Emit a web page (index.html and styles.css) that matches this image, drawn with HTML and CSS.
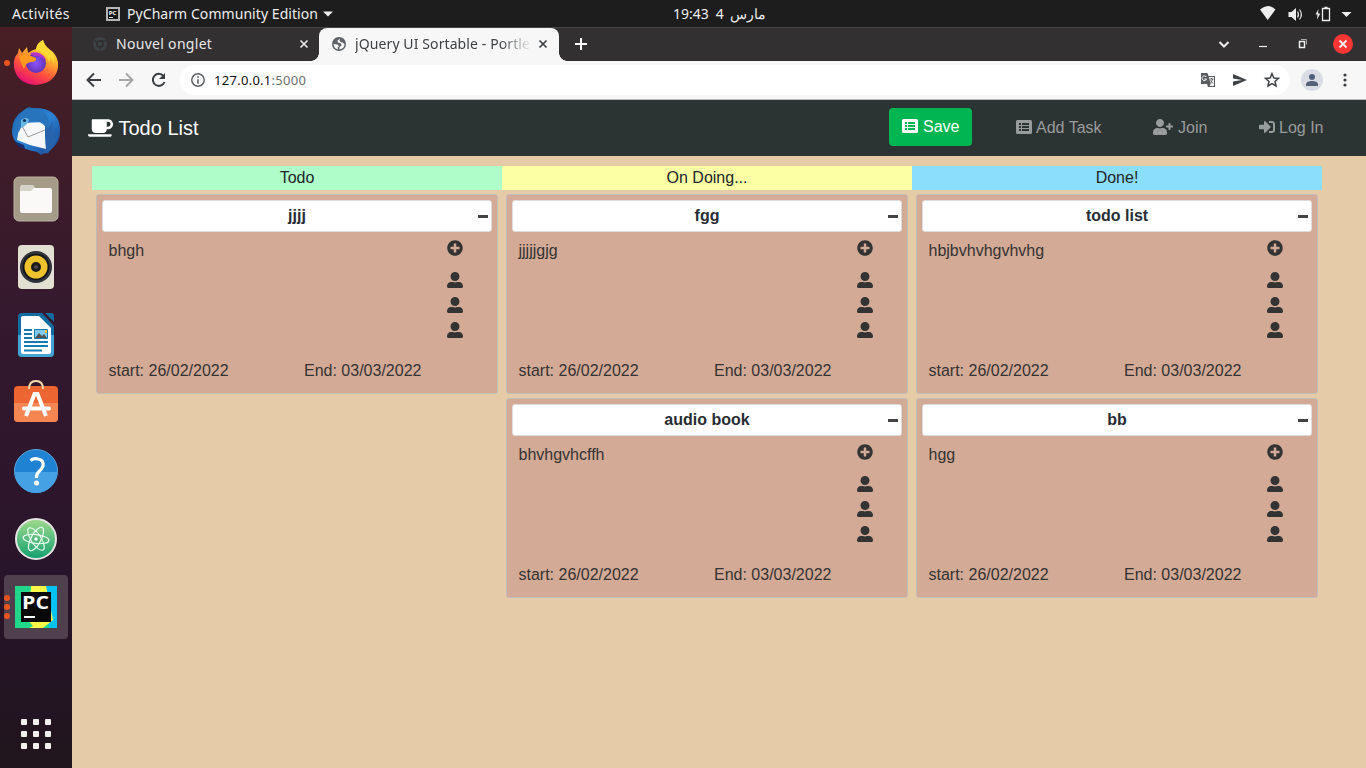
FILE: index.html
```
<!DOCTYPE html>
<html lang="fr">
<head>
<meta charset="utf-8">
<title>jQuery UI Sortable - Portlets</title>
<link rel="stylesheet" href="styles.css">
</head>
<body>
<svg class="defs" width="0" height="0">
<symbol id="coffee" viewBox="0 0 640 512"><path fill="currentColor" d="M192 384h192c53 0 96-43 96-96h32c70.6 0 128-57.4 128-128S582.6 32 512 32H120c-13.3 0-24 10.7-24 24v232c0 53 43 96 96 96zM512 96c35.3 0 64 28.7 64 64s-28.7 64-64 64h-32V96h32zm47.7 384H48.3c-47.6 0-61-64-36-64h583.3c25 0 11.8 64-35.9 64z"/></symbol>
<symbol id="user" viewBox="0 0 512 512"><path fill="currentColor" d="M256 288c79.5 0 144-64.5 144-144S335.5 0 256 0 112 64.5 112 144s64.5 144 144 144zm128 32h-55.1c-22.2 10.2-46.9 16-72.9 16s-50.6-5.8-72.9-16H128C57.3 320 0 377.3 0 448v16c0 26.5 21.5 48 48 48h416c26.5 0 48-21.5 48-48v-16c0-70.7-57.3-128-128-128z"/></symbol>
<symbol id="plus" viewBox="0 0 512 512"><path fill="currentColor" d="M256 8C119 8 8 119 8 256s111 248 248 248 248-111 248-248S393 8 256 8zm144 276c0 6.600-5.400 12-12 12h-92v92c0 6.600-5.400 12-12 12h-56c-6.600 0-12-5.400-12-12v-92h-92c-6.600 0-12-5.400-12-12v-56c0-6.600 5.400-12 12-12h92v-92c0-6.600 5.400-12 12-12h56c6.600 0 12 5.400 12 12v92h92c6.600 0 12 5.400 12 12v56z"/></symbol>
<symbol id="join" viewBox="0 0 640 512"><path fill="currentColor" d="M624 208h-64v-64c0-8.800-7.200-16-16-16h-32c-8.800 0-16 7.200-16 16v64h-64c-8.800 0-16 7.200-16 16v32c0 8.800 7.200 16 16 16h64v64c0 8.800 7.200 16 16 16h32c8.800 0 16-7.200 16-16v-64h64c8.800 0 16-7.200 16-16v-32c0-8.800-7.200-16-16-16zm-400 48c70.700 0 128-57.300 128-128S294.700 0 224 0 96 57.300 96 128s57.300 128 128 128zm89.600 32h-16.700c-22.200 10.200-46.900 16-72.900 16s-50.600-5.800-72.900-16h-16.700C60.200 288 0 348.200 0 422.400V464c0 26.500 21.500 48 48 48h352c26.500 0 48-21.500 48-48v-41.600c0-74.200-60.200-134.400-134.400-134.400z"/></symbol>
<symbol id="login" viewBox="0 0 512 512"><path fill="currentColor" d="M416 448h-84c-6.600 0-12-5.400-12-12v-40c0-6.600 5.400-12 12-12h84c17.700 0 32-14.300 32-32V160c0-17.700-14.300-32-32-32h-84c-6.600 0-12-5.400-12-12V76c0-6.600 5.400-12 12-12h84c53 0 96 43 96 96v192c0 53-43 96-96 96zm-47-209L201 71c-15-15-41-4.500-41 17v96H24c-13.300 0-24 10.700-24 24v96c0 13.300 10.700 24 24 24h136v96c0 21.500 26 32 41 17l168-168c9.300-9.400 9.300-24.600 0-34z"/></symbol>
<symbol id="list" viewBox="0 0 16 16"><path fill="currentColor" fill-rule="evenodd" d="M1.500 1h13A1.500 1.500 0 0 1 16 2.500v11a1.500 1.500 0 0 1-1.500 1.500h-13A1.500 1.500 0 0 1 0 13.500v-11A1.500 1.500 0 0 1 1.500 1zM3 4v2h2V4zM6 4v2h7V4zM3 7v2h2V7zM6 7v2h7V7zM3 10v2h2v-2zM6 10v2h7v-2z"/></symbol>
<symbol id="x" viewBox="0 0 10 10"><path d="M1.500 1.500l7 7M8.500 1.500l-7 7" fill="none" stroke="currentColor" stroke-width="1.700"/></symbol>
</svg>

<header class="topbar">
  <span class="activities">Activités</span>
  <svg class="pcmini" width="14" height="14" viewBox="0 0 14 14"><path fill="#b5b5b5" d="M0 0h14v14H0z"/><path fill="#161616" d="M2 2h10v10H2z"/><path stroke="#ddd" d="M3 10.500h4"/><text x="2.800" y="7.800" font-size="6" font-weight="700" fill="#fff" font-family="Open Sans, sans-serif">PC</text></svg>
  <span class="appname">PyCharm Community Edition</span>
  <svg class="caret" width="10" height="6"><path d="M0 .5h10L5 5.500z" fill="#eee"/></svg>
  <div class="clock"><span>19:43</span><span>4</span><span lang="ar">مارس</span></div>
  <svg class="status" width="106" height="20" viewBox="0 0 106 20" fill="#eee"><path d="M0 5.500Q8-1.500 15.500 5.500L7.700 16z"/><path d="M28.500 8h3l4.500-4v13l-4.500-4h-3z"/><path d="M37.500 7.500q2 3 0 6M39.500 5.500q3.800 5 0 10" fill="none" stroke="#ddd" stroke-width="1.200"/><path d="M58.500 5l-3 5.500h2L57 15.500l3.300-6H58z"/><path d="M62.500 4.500h7v12h-7zM64.500 3.500h3" fill="none" stroke="#eee" stroke-width="1.300"/><path d="M81.500 8h10L86.500 13z"/></svg>
</header>

<div class="desktop">
<nav class="dock">
  <div class="app"><i class="dot"></i>
   <svg width="48" height="48" viewBox="0 0 48 48"><defs><linearGradient id="ff" x1=".8" y1="0" x2=".3" y2="1"><stop stop-color="#fff44f"/><stop offset=".35" stop-color="#ffb52b"/><stop offset=".68" stop-color="#ff4f3f"/><stop offset="1" stop-color="#e50c77"/></linearGradient><radialGradient id="fp"><stop stop-color="#8a55ff"/><stop offset="1" stop-color="#6533b5"/></radialGradient></defs><path fill="url(#ff)" d="M7 9l3 5 5-6 1 6q4-3 8-4 1-6 7-9 1 5 6 9l4 3q6 7 5 15-2 16-22 18-19-1-22-18-1-9 4-14z"/><circle cx="24" cy="24" r="10" fill="url(#fp)"/><path fill="#ff9a1f" d="M7 17q7-4 12 0l5 2q1 4-5 4-6 1-7 7-4-7-5-13z"/><path fill="#ffd936" d="M24 10q1-6 7-9 1 5 6 9 6 6 5 15-1-5-4-7 0 3-1 5-3-9-13-13z"/><path fill="#b833c9" d="M18 14q11-3 16 7-8-5-12-4z"/></svg></div>
  <div class="app">
   <svg width="50" height="50" viewBox="0 0 50 50"><defs><linearGradient id="tb" x2="1" y2="1"><stop stop-color="#1c60a9"/><stop offset=".5" stop-color="#2b83d4"/><stop offset="1" stop-color="#193c88"/></linearGradient></defs><path fill="url(#tb)" d="M13 4q4-4 8-2Q48 1 49 23q1 14-10 21l-2 4-3-2-4 3-4-3Q1 42 1 25 1 11 13 4z"/><path fill="#f7f8fa" d="M9 17l25-1 1 27-16-4-13-5z"/><path d="M10 18l7 13 17-7" fill="none" stroke="#999"/><path fill="#2774bd" d="M4 24Q4 8 16 3q19-2 22 12 2 10-4 18V20Q28 14 20 15l-9 4-3 7z"/><path fill="#68b9df" d="M10 14q6-4 8 0-2 6-8 8z"/><circle cx="13.500" cy="14.500" r="1.600" fill="#153661"/><path d="M34 20q0 14 1 23l-3 5q12-3 15-20l-4 5 3-13-5 7 1-12-5 8z" fill="#2665ad"/><path d="M2 32q3 10 12 11l-1-4-8-3z" fill="#182d6b"/></svg></div>
  <div class="app">
   <svg width="46" height="46" viewBox="0 0 46 46"><rect x="1" y="1" width="44" height="44" rx="5" fill="#a49c89" stroke="#bbb3a0"/><path fill="#d7d2c7" d="M7 12V11q0-2 2-2h11l3 4v8H7z"/><path fill="#faf9f7" d="M7 15h11l3-3h16q2 0 2 2v21q0 2-2 2H9q-2 0-2-2z"/></svg></div>
  <div class="app">
   <svg width="38" height="46" viewBox="0 0 38 46"><rect x="1" y="1" width="36" height="44" rx="4" fill="#e2dfd3"/><circle cx="19" cy="23" r="16" fill="#32343c"/><circle cx="19" cy="23" r="13.500" fill="#161719"/><circle cx="19" cy="23" r="11.500" fill="#eec22c"/><circle cx="19" cy="23" r="5" fill="#1b1b1d"/><circle cx="19" cy="23" r="2" fill="#4a4a4a"/></svg></div>
  <div class="app">
   <svg width="38" height="46" viewBox="0 0 38 46"><path fill="#136ca0" d="M4 1h21l12 13v27q0 4-4 4H5q-4 0-4-4V5q0-4 3-4z"/><path fill="#42a3d4" d="M1 23h36v18q0 4-4 4H5q-4 0-4-4z"/><path fill="#fff" d="M6 4h16l12 12v24q0 2-2 2H6q-2 0-2-2V6q0-2 2-2z"/><path fill="#136ca0" d="M28 1h6q3 0 3 3v6z"/><path d="M7 18h8M7 22h8M7 26h8M7 30h24M7 34h24M7 38.500h18" stroke="#167bb5" stroke-width="2"/><path fill="#80c9ed" stroke="#167bb5" d="M17.500 17.500h13v9h-13z"/><path fill="#525252" d="M18 26l4-5 3 3 2-2 3 4z"/><path fill="#f5c331" d="M28 18h2v3h-2z"/></svg></div>
  <div class="app">
   <svg class="store" width="46" height="44" viewBox="0 0 46 44"><rect x="1" y="7" width="44" height="36" rx="4" fill="#ed6530"/><path fill="#f48653" d="M1 24h44v15q0 4-4 4H5q-4 0-4-4z"/><path d="M16 10q0-8 7-8t7 8" fill="none" stroke="#f4dfad" stroke-width="2"/><path d="M13 37l8.500-22h3L33 37" fill="none" stroke="#fff" stroke-width="4"/><path d="M11 29.500h25" stroke="#fff" stroke-width="4" stroke-linecap="round"/></svg></div>
  <div class="app">
   <svg width="46" height="46" viewBox="0 0 46 46"><circle cx="23" cy="23" r="21.500" fill="#1f82d2" stroke="#57a7e0"/><path d="M2 24h42a21 21 0 0 1-42 0z" fill="#46a0e4"/><path d="M17.500 12.500Q21 10 25 11q6 1 5 7-1 3-4 5.500-2.500 2-2.500 6.500" fill="none" stroke="#fff" stroke-width="3.200"/><circle cx="23.500" cy="35" r="2.500" fill="#fff"/></svg></div>
  <div class="app">
   <svg width="44" height="44" viewBox="0 0 44 44"><defs><linearGradient id="at" x2="0" y2="1"><stop stop-color="#a0da8c"/><stop offset="1" stop-color="#12a071"/></linearGradient></defs><circle cx="22" cy="22" r="20" fill="url(#at)" stroke="#e5e3e4" stroke-width="2"/><g fill="none" stroke="#e9fff1" stroke-width="1.200"><ellipse cx="22" cy="22" rx="5" ry="13" transform="rotate(28 22 22)"/><ellipse cx="22" cy="22" rx="5" ry="13" transform="rotate(-33 22 22)"/><ellipse cx="22" cy="22" rx="13" ry="4.500" transform="rotate(7 22 22)"/></g><circle cx="22" cy="22" r="1.700" fill="#fff"/></svg></div>
  <div class="app current"><i class="dot three"></i>
   <svg width="42" height="42" viewBox="0 0 42 42"><path fill="#21d789" d="M0 0h42v42H0z"/><path fill="#07c3f2" d="M29 0h13v42h-8z"/><path fill="#fcf84a" d="M16 0h15l7 34-10 8H13z"/><path fill="#21d789" d="M0 20l18 20-4 2H0z"/><path fill="#090909" d="M6 6h30v30H6z"/><path fill="#fff" d="M9 30h11v2H9z"/><text x="7" y="23" font-family="Open Sans, sans-serif" font-weight="700" font-size="18.500" textLength="27" lengthAdjust="spacingAndGlyphs" fill="#fff">PC</text></svg></div>
  <div class="grid"><i></i><i></i><i></i><i></i><i></i><i></i><i></i><i></i><i></i></div>
</nav>

<main class="browser">
  <div class="tabs">
    <div class="tab"><svg width="14" height="14" viewBox="0 0 14 14"><circle cx="7" cy="7" r="5.500" fill="none" stroke="#3d4245" stroke-width="3"/><circle cx="7" cy="7" r="2.300" fill="#3d4245"/><path d="M7 4h6M4.500 8L2 3M9.500 8l-3 5" stroke="#2d2b2c"/></svg><span class="t1">Nouvel onglet</span><svg class="close" width="10" height="10"><use href="#x"/></svg></div>
    <div class="tab active"><svg width="14" height="14" viewBox="0 0 14 14"><circle cx="7" cy="7" r="7" fill="#5f6368"/><path fill="#f7f7f7" d="M8 1.500L5.500 3.500 6 5.500l3 1 .500 2-2 1.500V12.500Q12.500 11.500 12.500 7L10.500 5.500 8.500 5l-1-1.500zM1.500 7l4 .500 1.500 2-1.500 1 .500 2Q2 11.500 1.500 7z"/></svg><span class="t2">jQuery UI Sortable - Portle</span><svg class="close" width="10" height="10"><use href="#x"/></svg></div>
    <svg class="newtab" width="12" height="12"><path d="M6 0v12M0 6h12" stroke="#fff" stroke-width="2"/></svg>
    <div class="winctl"><svg width="146" height="22" viewBox="0 0 146 22" fill="none" stroke="#eee"><path d="M8.500 9l4.500 4.500L17.500 9" stroke-width="2"/><path d="M48 13.500h8" stroke-width="1.200"/><path d="M88.500 8.500h5v6h-5z" stroke-width="1.500"/><path d="M90 6.500h5.500v5" stroke="#aaa"/><circle cx="132" cy="11" r="10" fill="#fc3535" stroke="none"/><path d="M128.500 7.500l7 7M135.500 7.500l-7 7" stroke-width="1.800"/></svg></div>
  </div>
  <div class="toolbar">
    <svg class="navs" width="88" height="18" viewBox="0 0 88 18" fill="none" stroke="#3c4043" stroke-width="2"><path d="M15 9H2M8 2.500L1.500 9 8 15.500"/><path stroke="#a5a5a7" d="M33 9h13M40 2.500L46.500 9 40 15.500"/><path d="M77.500 5A6 6 0 1 0 78.500 11"/><path d="M79 2v6h-6z" fill="#3c4043" stroke="none"/></svg>
    <div class="address"><svg width="14" height="14" viewBox="0 0 14 14"><circle cx="7" cy="7" r="6.200" fill="none" stroke="#5f6368" stroke-width="1.500"/><path d="M7 3.300v1.500M7 6.200v4.500" stroke="#5f6368" stroke-width="1.600"/></svg><span class="url">127.0.0.1<em>:5000</em></span>
      <svg class="actions" width="80" height="18" viewBox="0 0 80 18"><path fill="#5b5e61" d="M1 2h6.500l1 3H15v11H8l-1-3H1z"/><path fill="#f3f3f3" d="M8.800 6H14v9H9.500l1.200-2z"/><path d="M6.300 6A2.300 2.300 0 1 0 6.500 8H4.500" fill="none" stroke="#fff"/><path d="M9.800 8h3.700M11.500 7v1M12.800 8l-2.300 4M10.500 9.500l2.500 3" stroke="#666" fill="none"/><path fill="#3f4245" d="M33 3l14 6-14 6v-4.500l9-1.500-9-1.500z"/><path d="M72 2.700l1.900 4.300 4.600.4-3.500 3 1.100 4.600-4.100-2.400-4.100 2.400 1.100-4.600-3.500-3 4.600-.4z" fill="none" stroke="#3f4245" stroke-width="1.500"/></svg></div>
    <svg class="profile" width="22" height="22" viewBox="0 0 22 22"><circle cx="11" cy="11" r="11" fill="#dadde3"/><circle cx="11" cy="8" r="3" fill="#53617a"/><path d="M5 17v-1.500Q5 12 11 12t6 3.500V17z" fill="#53617a"/></svg>
    <svg class="more" width="4" height="14" fill="#3c4043"><circle cx="2" cy="2" r="1.600"/><circle cx="2" cy="7" r="1.600"/><circle cx="2" cy="12" r="1.600"/></svg>
  </div>

  <div class="navbar">
    <div class="brand"><svg width="25" height="20"><use href="#coffee"/></svg>Todo List</div>
    <a class="save"><svg width="16" height="16"><use href="#list"/></svg>Save</a>
    <a class="link add"><svg width="16" height="16"><use href="#list"/></svg>Add Task</a>
    <a class="link join"><svg width="20" height="16"><use href="#join"/></svg>Join</a>
    <a class="link"><svg width="16" height="16"><use href="#login"/></svg>Log In</a>
  </div>

  <div class="board">
    <section class="column">
      <h2 class="todo">Todo</h2>
      <article class="card"><h3>jjjj<i></i></h3><div class="body"><p>bhgh</p><div class="people"><svg><use href="#plus"/></svg><svg><use href="#user"/></svg><svg><use href="#user"/></svg><svg><use href="#user"/></svg></div></div><footer><span>start: 26/02/2022</span><span>End: 03/03/2022</span></footer></article>
    </section>
    <section class="column">
      <h2 class="doing">On Doing...</h2>
      <article class="card"><h3>fgg<i></i></h3><div class="body"><p>jjjjjgjg</p><div class="people"><svg><use href="#plus"/></svg><svg><use href="#user"/></svg><svg><use href="#user"/></svg><svg><use href="#user"/></svg></div></div><footer><span>start: 26/02/2022</span><span>End: 03/03/2022</span></footer></article>
      <article class="card"><h3>audio book<i></i></h3><div class="body"><p>bhvhgvhcffh</p><div class="people"><svg><use href="#plus"/></svg><svg><use href="#user"/></svg><svg><use href="#user"/></svg><svg><use href="#user"/></svg></div></div><footer><span>start: 26/02/2022</span><span>End: 03/03/2022</span></footer></article>
    </section>
    <section class="column">
      <h2 class="done">Done!</h2>
      <article class="card"><h3>todo list<i></i></h3><div class="body"><p>hbjbvhvhgvhvhg</p><div class="people"><svg><use href="#plus"/></svg><svg><use href="#user"/></svg><svg><use href="#user"/></svg><svg><use href="#user"/></svg></div></div><footer><span>start: 26/02/2022</span><span>End: 03/03/2022</span></footer></article>
      <article class="card"><h3>bb<i></i></h3><div class="body"><p>hgg</p><div class="people"><svg><use href="#plus"/></svg><svg><use href="#user"/></svg><svg><use href="#user"/></svg><svg><use href="#user"/></svg></div></div><footer><span>start: 26/02/2022</span><span>End: 03/03/2022</span></footer></article>
    </section>
  </div>
</main>
</div>
</body>
</html>
```
FILE: styles.css
```
* { box-sizing: border-box; margin: 0; padding: 0; }
body { width: 1366px; height: 768px; overflow: hidden; display: flex; flex-direction: column; font-family: "Noto Sans", "Open Sans", sans-serif; background: #e5cba8; }
svg { display: block; flex: none; }
.defs { position: absolute; }

.topbar { height: 27px; flex: none; background: #1d1d1d; color: #eee; display: flex; align-items: center; padding-left: 12px; font-size: 14px; white-space: nowrap; }
.activities { width: 94px; letter-spacing: .35px; }
.appname { margin-left: 7px; width: 191px; letter-spacing: .06px; }
.caret { margin-left: 5px; }
.clock { display: flex; gap: 7px; margin-left: 340px; width: 96px; }
.clock span:last-child { margin-left: -1px; }
.status { margin-left: auto; margin-right: 0; }

.desktop { display: flex; flex: 1; min-height: 0; }
.dock { width: 72px; background: linear-gradient(#471f24, #35192e 38%, #28142a 75%, #20151d); display: flex; flex-direction: column; align-items: center; padding-top: 4px; }
.app { position: relative; width: 64px; height: 64px; margin-bottom: 4px; display: flex; align-items: center; justify-content: center; border-radius: 4px; }
.store { margin-bottom: 4px; }
.current { background: #50404e; }
.dot { position: absolute; left: 0; top: 29px; width: 6px; height: 6px; border-radius: 50%; background: #e95420; }
.three { box-shadow: 0 -9px #e95420, 0 9px #e95420; }
.grid { display: grid; grid-template-columns: repeat(3, 6px); gap: 6px; margin-top: auto; margin-bottom: 19px; }
.grid i { width: 6px; height: 6px; background: #f2f0ee; border-radius: 1px; }

.browser { flex: 1; display: flex; flex-direction: column; min-width: 0; }
.tabs { height: 34px; background: #323031; border-top: 1px solid #454344; display: flex; align-items: center; padding-bottom: 1px; color: #e8e8e8; font-size: 14px; }
.tab { width: 247px; height: 33px; display: flex; align-items: center; padding: 0 0 1px 21px; white-space: nowrap; }
.tab.active { position: relative; width: 240px; padding-left: 13px; background: #f7f7f7; color: #3e4144; border-radius: 8px 8px 0 0; margin-bottom: -1px; }
.tab.active::before, .tab.active::after { content: ""; position: absolute; bottom: 0; width: 8px; height: 8px; }
.tab.active::before { left: -8px; background: radial-gradient(circle at 0 0, #323031 7.5px, #f7f7f7 8px); }
.tab.active::after { right: -8px; background: radial-gradient(circle at 100% 0, #323031 7.5px, #f7f7f7 8px); }
.t1 { margin-left: 9px; width: 183px; padding-bottom: 1px; letter-spacing: .3px; }
.t2 { margin-left: 9px; width: 175px; padding-bottom: 1px; letter-spacing: .1px; -webkit-mask-image: linear-gradient(90deg, #000 145px, transparent 177px); }
.active .close { margin-left: 8px; }
.newtab { margin-left: 16px; }
.winctl { margin-left: auto; margin-right: 9px; }

.toolbar { height: 39px; background: #f7f7f7; border-bottom: 1px solid #b9b9b9; display: flex; align-items: center; }
.navs { margin-left: 14px; }
.address { margin-left: 6px; width: 1110px; height: 30px; border-radius: 15px; background: #fff; display: flex; align-items: center; padding-left: 11px; }
.url { margin-left: 9px; color: #111; font-size: 13px; letter-spacing: .28px; }
.url em { font-style: normal; color: #6a6d71; }
.actions { margin-left: auto; margin-right: 10px; }
.profile { margin-left: 11px; }
.more { margin-left: 20px; }

.navbar { height: 56px; background: #2c3333; color: #999c9c; font: 16px/24px "Liberation Sans", Arial, sans-serif; display: flex; align-items: center; padding-left: 16px; }
.brand { display: flex; align-items: center; gap: 5.500px; width: 801px; color: #fff; font-size: 20px; }
.save { display: flex; align-items: center; width: 83px; height: 38px; padding: 0 0 1px 13px; gap: 5px; background: #00b552; color: #fff; border-radius: 4px; margin-bottom: 2px; }
.save svg { margin-bottom: 1px; }
.link { display: flex; align-items: center; gap: 4px; }
.link svg { margin-bottom: 2px; }
.add { margin-left: 44px; width: 137px; }
.join { width: 106px; gap: 5px; }

.board { flex: 1; display: flex; align-items: flex-start; padding: 10px 20px; font: 16px/24px "Liberation Sans", Arial, sans-serif; color: #333; }
.column { width: 410px; }
.column h2 { height: 24px; margin-bottom: 4px; text-align: center; font-size: 16px; font-weight: 400; color: #212529; }
.todo { background: #affdc8; }
.doing { background: #fdffa5; }
.done { background: #8cdefd; }
.card { width: 402px; height: 200px; margin: 0 4px 4px; padding: 5px; background: #d3aa96; border: 1px solid #c0bdbb; border-radius: 3px; display: flex; flex-direction: column; }
.card h3 { position: relative; height: 32px; flex: none; background: #fff; border: 1px solid #ddd; border-radius: 3px; text-align: center; font-size: 16px; line-height: 30px; color: #282c35; }
.card h3 i { position: absolute; right: 3px; top: 14px; width: 10px; height: 3px; background: #444; }
.body { display: flex; flex: none; padding: 7px 29px 0 6.500px; height: 127px; justify-content: space-between; }
.people { display: flex; flex-direction: column; gap: 9px; padding-top: 1px; color: #333; }
.people svg { width: 16px; height: 16px; }
.people svg:first-child { margin-bottom: 7px; }
.card footer { display: flex; padding-left: 6.500px; }
.card footer span { flex: none; width: 195.500px; white-space: nowrap; }
.card footer span:last-child { width: auto; }
```
